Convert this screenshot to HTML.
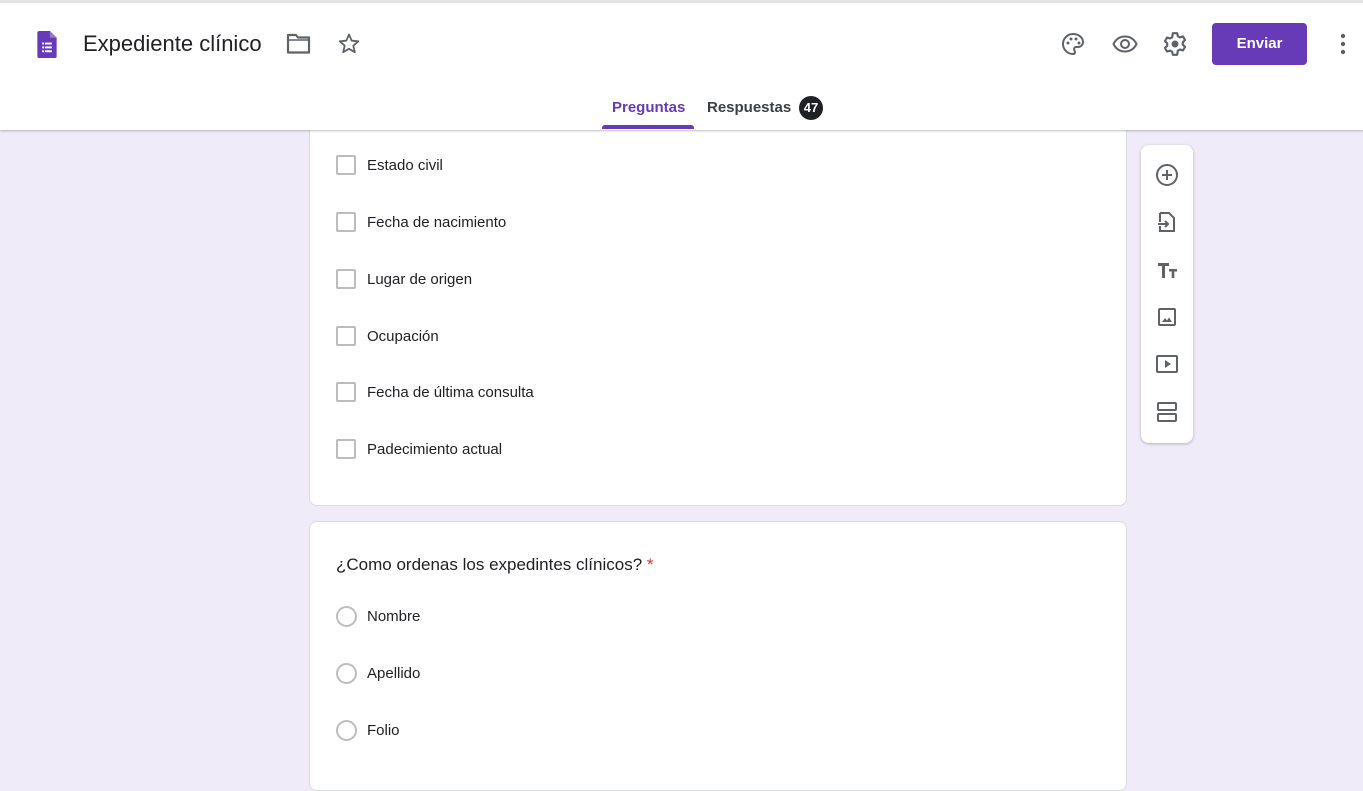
<!DOCTYPE html>
<html><head><meta charset="utf-8"><style>
*{box-sizing:border-box;margin:0;padding:0}
body{width:1363px;height:769px;overflow:hidden;background:#f0ebf8;font-family:"Liberation Sans",sans-serif;position:relative}
.top{position:absolute;left:0;top:0;width:1363px;height:130px;background:#fff;box-shadow:0 1px 2px rgba(0,0,0,.25);z-index:2}
.bar{position:absolute;left:0;top:0;width:1363px;height:3px;background:#e4e4e4}
.title{position:absolute;left:83px;top:31px;font-size:22px;color:#202124}
.ic{position:absolute}
.btn{position:absolute;left:1212px;top:23px;width:95px;height:42px;background:#673ab7;border-radius:4px;color:#fff;font-size:15px;font-weight:bold;text-align:center;line-height:42px}
.tab{position:absolute;top:99px;font-size:15px}
.card{position:absolute;left:309px;width:818px;background:#fff;border-radius:8px;border:1px solid #dadce0}
.item{position:absolute;left:57px;font-size:15px;color:#202124}
.cb{position:absolute;left:26px;width:20px;height:20px;border:2px solid #bdbdbd;border-radius:2px}
.rb{position:absolute;left:26px;width:21px;height:21px;border:2px solid #bdbdbd;border-radius:50%}
.side{position:absolute;left:1141px;top:145px;width:52px;height:298px;background:#fff;border-radius:8px;box-shadow:0 1px 3px rgba(0,0,0,.25)}
</style></head><body>
<div class="top">
<div class="bar"></div>
<svg class="ic" style="left:37px;top:31px" width="20" height="27" viewBox="0 0 20 28"><path d="M2 0h11l7 7v19a2 2 0 0 1-2 2H2a2 2 0 0 1-2-2V2a2 2 0 0 1 2-2z" fill="#673ab7"/><path d="M13 0v7h7z" fill="#9575cd"/><g fill="#fff"><rect x="5" y="12" width="2" height="2"/><rect x="8" y="12" width="7" height="2"/><rect x="5" y="16" width="2" height="2"/><rect x="8" y="16" width="7" height="2"/><rect x="5" y="20" width="2" height="2"/><rect x="8" y="20" width="7" height="2"/></g></svg>
<div class="title">Expediente clínico</div>
<svg class="ic" style="left:286px;top:32px" width="26" height="24" viewBox="0 0 26 24"><path d="M2 3h8l2 2.5h11v15H2z" fill="none" stroke="#5f6368" stroke-width="2.2" stroke-linejoin="round"/><path d="M2 8h21" stroke="#5f6368" stroke-width="1.5"/></svg>
<svg class="ic" style="left:337px;top:32px" width="24" height="24" viewBox="0 0 24 24"><path d="M12 2.5l2.7 6.2 6.6.6-5 4.4 1.5 6.5L12 16.8 6.2 20.2l1.5-6.5-5-4.4 6.6-.6z" fill="none" stroke="#5f6368" stroke-width="1.8" stroke-linejoin="round"/></svg>
<svg class="ic" style="left:1061px;top:32px" width="24" height="24" viewBox="0 0 24 24"><path d="M12 2a10 10 0 0 0 0 20c1.5 0 2-1 2-2 0-1.5-1-1.5-1-3 0-1 1-2 2-2h2a5 5 0 0 0 5-5c0-4.5-4.5-8-10-8z" fill="none" stroke="#5f6368" stroke-width="2"/><circle cx="7" cy="11" r="1.5" fill="#5f6368"/><circle cx="10" cy="7" r="1.5" fill="#5f6368"/><circle cx="15" cy="7" r="1.5" fill="#5f6368"/><circle cx="18" cy="11" r="1.5" fill="#5f6368"/></svg>
<svg class="ic" style="left:1112px;top:32px" width="26" height="24" viewBox="0 0 26 24"><path d="M1.5 12C4 7 8 4.5 13 4.5S22 7 24.5 12C22 17 18 19.5 13 19.5S4 17 1.5 12z" fill="none" stroke="#5f6368" stroke-width="2"/><circle cx="13" cy="12" r="4" fill="none" stroke="#5f6368" stroke-width="2"/></svg>
<svg class="ic" style="left:1162px;top:31px" width="26" height="26" viewBox="0 0 24 24"><path d="M10 2h4l.6 2.8 2 1.1 2.7-.9 2 3.4-2.1 1.9v2.4l2.1 1.9-2 3.4-2.7-.9-2 1.1L14 22h-4l-.6-2.8-2-1.1-2.7.9-2-3.4 2.1-1.9v-2.4L2.7 9.4l2-3.4 2.7.9 2-1.1z" fill="none" stroke="#5f6368" stroke-width="2" stroke-linejoin="round"/><circle cx="12" cy="12" r="3.2" fill="#5f6368"/></svg>
<div class="btn">Enviar</div>
<svg class="ic" style="left:1338px;top:33px" width="10" height="22" viewBox="0 0 10 22"><circle cx="5" cy="3" r="2.2" fill="#5f6368"/><circle cx="5" cy="11" r="2.2" fill="#5f6368"/><circle cx="5" cy="19" r="2.2" fill="#5f6368"/></svg>
<div class="tab" style="left:612px;color:#673ab7;font-weight:bold">Preguntas</div>
<div style="position:absolute;left:602px;top:125px;width:92px;height:4px;background:#673ab7;border-radius:3px 3px 0 0"></div>
<div class="tab" style="left:707px;color:#3c4043;font-weight:bold">Respuestas</div>
<div style="position:absolute;left:799px;top:96px;width:24px;height:24px;border-radius:50%;background:#202124;color:#fff;font-size:13px;font-weight:bold;text-align:center;line-height:24px">47</div>
</div>
<div class="card" style="top:110px;height:396px">
<div class="cb" style="top:44px"></div><div class="item" style="top:46px">Estado civil</div>
<div class="cb" style="top:101px"></div><div class="item" style="top:103px">Fecha de nacimiento</div>
<div class="cb" style="top:158px"></div><div class="item" style="top:160px">Lugar de origen</div>
<div class="cb" style="top:215px"></div><div class="item" style="top:217px">Ocupación</div>
<div class="cb" style="top:271px"></div><div class="item" style="top:273px">Fecha de última consulta</div>
<div class="cb" style="top:328px"></div><div class="item" style="top:330px">Padecimiento actual</div>
</div>
<div class="card" style="top:521px;height:270px">
<div class="item" style="top:33px;left:26px;font-size:17px">¿Como ordenas los expedintes clínicos? <span style="color:#d93025">*</span></div>
<div class="rb" style="top:84px"></div><div class="item" style="top:86px">Nombre</div>
<div class="rb" style="top:141px"></div><div class="item" style="top:143px">Apellido</div>
<div class="rb" style="top:198px"></div><div class="item" style="top:200px">Folio</div>
</div>
<div class="side">
<svg class="ic" style="left:14px;top:18px" width="24" height="24" viewBox="0 0 24 24"><circle cx="12" cy="12" r="10" fill="none" stroke="#5f6368" stroke-width="2"/><path d="M12 7v10M7 12h10" stroke="#5f6368" stroke-width="2"/></svg>
<svg class="ic" style="left:14px;top:65px" width="24" height="24" viewBox="0 0 24 24"><path d="M5 3h9l5 5v13H5v-5M5 12V3" fill="none" stroke="#5f6368" stroke-width="2"/><path d="M3 14h10M10 11l3 3-3 3" fill="none" stroke="#5f6368" stroke-width="2"/></svg>
<svg class="ic" style="left:14px;top:113px" width="24" height="24" viewBox="0 0 24 24"><path d="M3 5h11v3h-4v12H7V8H3zM14 11h8v2.5h-2.7V20h-2.6v-6.5H14z" fill="#5f6368"/></svg>
<svg class="ic" style="left:14px;top:160px" width="24" height="24" viewBox="0 0 24 24"><rect x="4" y="4" width="16" height="16" rx="1" fill="none" stroke="#5f6368" stroke-width="2"/><path d="M7 17l3-4 2 2.5 2-3 3 4.5z" fill="#5f6368"/></svg>
<svg class="ic" style="left:14px;top:207px" width="24" height="24" viewBox="0 0 24 24"><rect x="2" y="4" width="20" height="16" rx="1" fill="none" stroke="#5f6368" stroke-width="2"/><path d="M10 8v8l6-4z" fill="#5f6368"/></svg>
<svg class="ic" style="left:14px;top:255px" width="24" height="24" viewBox="0 0 24 24"><rect x="3" y="3" width="18" height="7" rx="1" fill="none" stroke="#5f6368" stroke-width="2"/><rect x="3" y="14" width="18" height="7" rx="1" fill="none" stroke="#5f6368" stroke-width="2"/></svg>
</div>
</body></html>
